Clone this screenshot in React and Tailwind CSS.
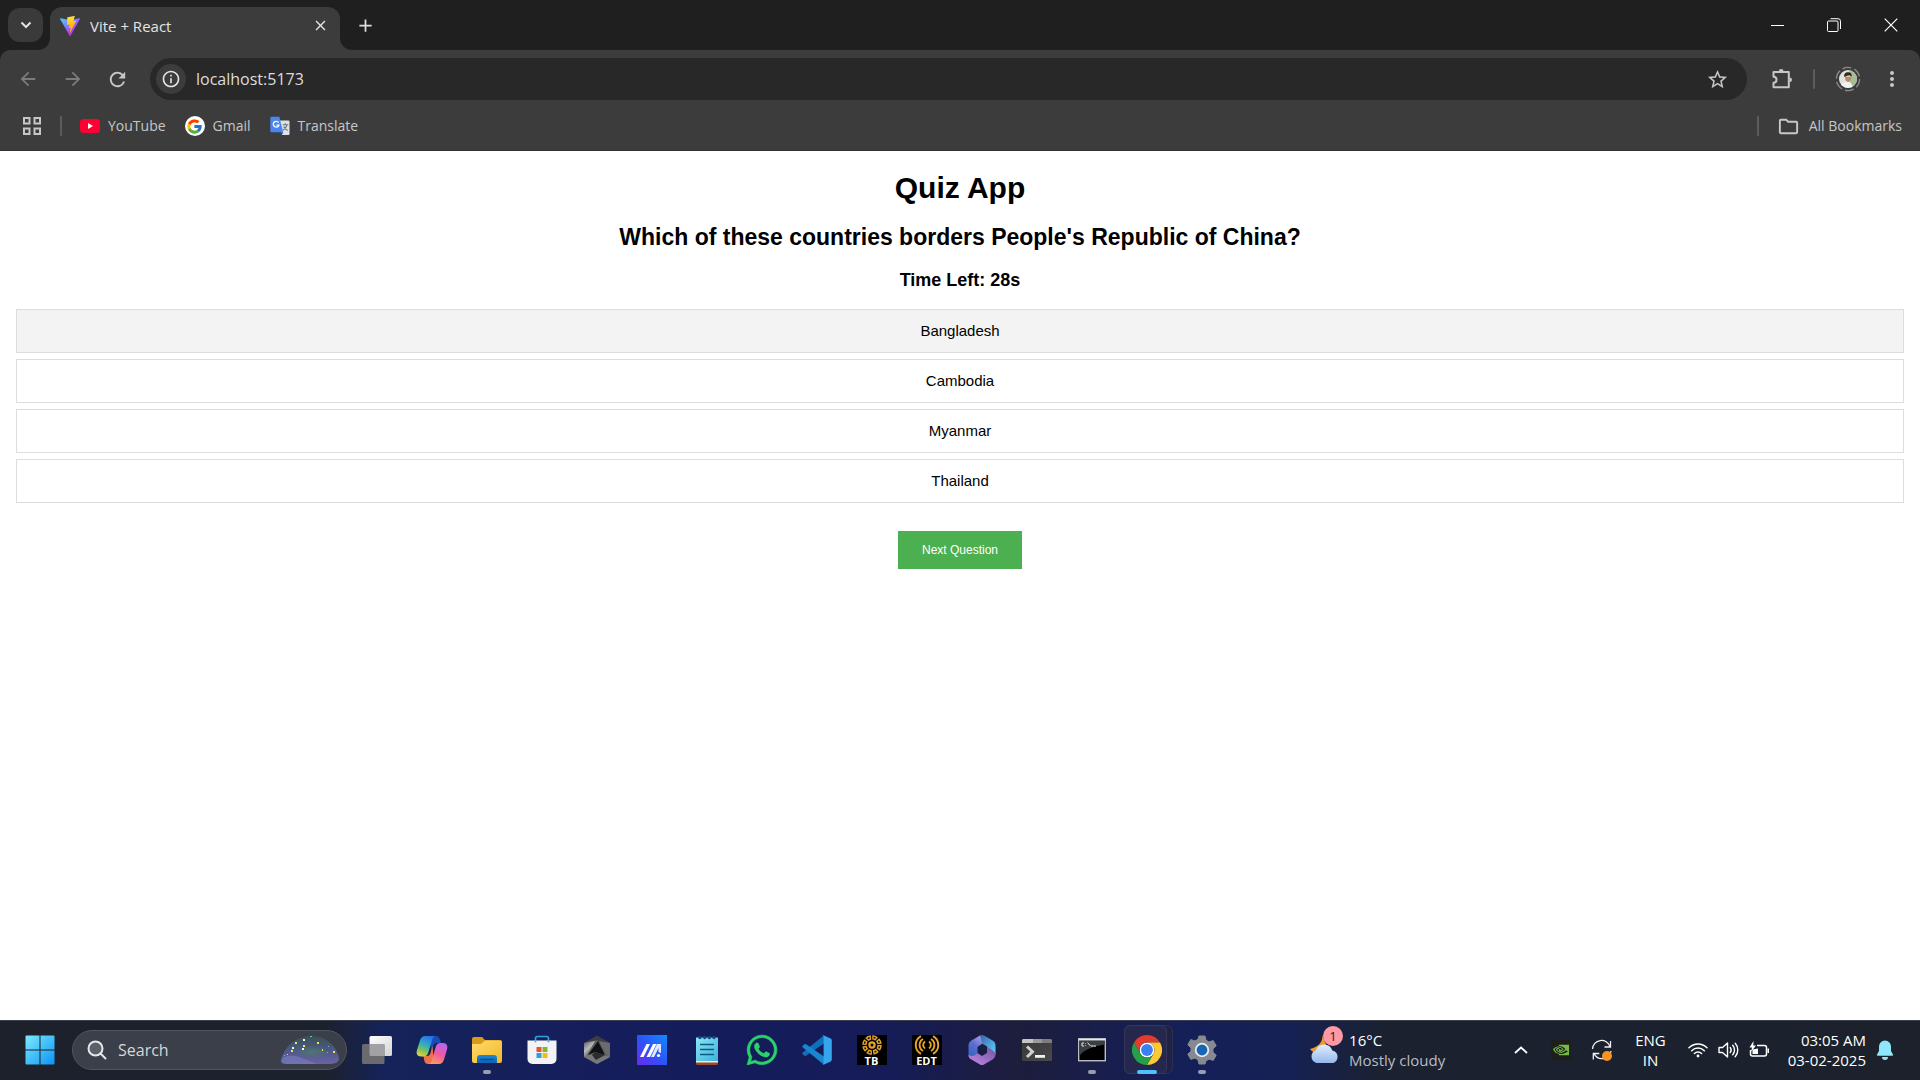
import React from "react";
import {
  MdArrowBack,
  MdArrowForward,
  MdRefresh,
  MdOutlineInfo,
  MdStarBorder,
  MdMoreVert,
  MdOutlineFolder,
  MdClose,
  MdAdd,
} from "react-icons/md";
import { FcGoogle } from "react-icons/fc";
import { FaWhatsapp } from "react-icons/fa";
import { SiNvidia } from "react-icons/si";

/* ---------- browser icons ---------- */

function ViteLogo() {
  return (
    <svg viewBox="0 0 256 257" className="size-5 shrink-0">
      <defs>
        <linearGradient id="viteA" x1="0" x2="0.58" y1="0.07" y2="0.79">
          <stop offset="0" stopColor="#41d1ff" />
          <stop offset="1" stopColor="#bd34fe" />
        </linearGradient>
        <linearGradient id="viteB" x1="0.43" x2="0.5" y1="0.02" y2="0.89">
          <stop offset="0" stopColor="#ffea83" />
          <stop offset="0.08" stopColor="#ffdd35" />
          <stop offset="1" stopColor="#ffa800" />
        </linearGradient>
      </defs>
      <path fill="url(#viteA)" d="M255.153 37.938L134.897 252.976c-2.483 4.44-8.862 4.466-11.382.048L.875 37.958c-2.746-4.814 1.371-10.646 6.827-9.67l120.385 21.517a6.537 6.537 0 0 0 2.322-.004l117.867-21.483c5.438-.991 9.574 4.796 6.877 9.62Z" />
      <path fill="url(#viteB)" d="M185.432.063L96.44 17.501a3.268 3.268 0 0 0-2.634 3.014l-5.474 92.456a3.268 3.268 0 0 0 3.997 3.378l24.777-5.718c2.318-.535 4.413 1.507 3.936 3.838l-7.361 36.047c-.495 2.426 1.782 4.5 4.151 3.78l15.304-4.649c2.372-.72 4.652 1.36 4.15 3.788l-11.698 56.621c-.732 3.542 3.979 5.473 5.943 2.437l1.313-2.028l72.516-144.72c1.215-2.423-.88-5.186-3.54-4.672l-25.505 4.922c-2.396.462-4.435-1.77-3.759-4.114l16.646-57.705c.677-2.35-1.37-4.583-3.769-4.113Z" />
    </svg>
  );
}

function ExtensionIcon() {
  return (
    <svg viewBox="0 0 22 22" className="size-[22px]" fill="none" stroke="#c7c7c7" strokeWidth="2" strokeLinejoin="round">
      <path d="M2.5 4h15.3v15.3H2.5v-4.600c2 0 3-1.400 3-3s-1-3-3-3z" />
      <path d="M7.800 3.400a2.400 2.400 0 0 1 4.800 0zM18.600 9.400a2.400 2.400 0 0 1 0 4.800z" fill="#c7c7c7" stroke="none" />
    </svg>
  );
}

function AvatarIcon() {
  return (
    <svg viewBox="0 0 26 26" className="size-[26px]">
      <defs>
        <clipPath id="avatarClip">
          <circle cx="13" cy="13" r="9" />
        </clipPath>
      </defs>
      <circle cx="13" cy="13" r="11.600" fill="none" stroke="#8a8a8a" strokeWidth="1.400" strokeDasharray="9 3.150" />
      <g clipPath="url(#avatarClip)">
        <rect width="26" height="26" fill="#dfe3dc" />
        <path d="M14 4h10v18h-8z" fill="#a9bd94" />
        <path d="M4 24c1-6 4-8 8-8s6 3 6 8z" fill="#f1f3f7" />
        <path d="M10 10.500c0 3 1 5.500 3 5.500s3.200-2 3.200-5z" fill="#b98a68" />
        <path d="M9.300 11c-.6-3.500 1.500-4.800 3.800-4.800s4.200 1.300 3.500 4.600l-2-1.600-2.600.6z" fill="#33281f" />
      </g>
    </svg>
  );
}

function YouTubeLogo() {
  return (
    <svg viewBox="0 0 20 20" className="size-5">
      <rect y="3" width="20" height="14" rx="3.500" fill="#ff0033" />
      <path d="M8 7v6l5-3z" fill="#fff" />
    </svg>
  );
}

function TranslateLogo() {
  return (
    <svg viewBox="0 0 20 20" className="size-5">
      <path d="M8 4.500h10.500a1 1 0 0 1 1 1V18a1 1 0 0 1-1 1H12z" fill="#dfe1e5" />
      <path d="M1.500.8h7.800l3.900 15.400H1.500a1.200 1.200 0 0 1-1.200-1.200V2A1.200 1.200 0 0 1 1.500.8z" fill="#4a86ee" />
      <path d="M9.500 16.200h3.700L12 19z" fill="#2452a8" />
      <path d="M12.700 8.700h5.600M15.300 7.200v1.500M17 8.900c-.5 2.300-2 4-4 5.300M13.700 10.500c.7 1.700 2 3 4 4" stroke="#677582" strokeWidth="1.100" fill="none" />
      <path d="M8.600 6.600A2.900 2.900 0 1 0 9 9.100H6.400" fill="none" stroke="#fff" strokeWidth="1.300" />
    </svg>
  );
}

function AppsGridIcon() {
  return (
    <svg viewBox="0 0 18 18" className="size-[18px]" fill="none" stroke="#c7c7c7" strokeWidth="2">
      <path d="M1 1h5.500v5.500H1zM11.500 1H17v5.500h-5.500zM1 11.500h5.500V17H1zM11.500 11.500H17V17h-5.500z" />
    </svg>
  );
}

/* ---------- taskbar icons ---------- */

function WindowsLogo() {
  return (
    <svg viewBox="0 0 30 30" className="size-[30px]">
      <defs>
        <linearGradient id="winG" x1="0" y1="0" x2="1" y2="1">
          <stop offset="0" stopColor="#7deafd" />
          <stop offset="1" stopColor="#0a94f5" />
        </linearGradient>
      </defs>
      <path fill="url(#winG)" d="M1.500.5H14.500v14H.5v-13a1 1 0 0 1 1-1zM15.500.5h13a1 1 0 0 1 1 1v13h-14zM.5 15.500h14v14h-13a1 1 0 0 1-1-1zM15.500 15.500h14v13a1 1 0 0 1-1 1h-13z" />
    </svg>
  );
}

function SearchArt() {
  return (
    <svg viewBox="0 0 60 34" className="h-[34px] w-[60px]">
      <defs>
        <linearGradient id="hill" x1="0" y1="0" x2="0" y2="1">
          <stop offset="0" stopColor="#3f6c70" stopOpacity="0.35" />
          <stop offset="0.5" stopColor="#4e5c8c" stopOpacity="0.9" />
          <stop offset="1" stopColor="#6a62a4" />
        </linearGradient>
        <radialGradient id="hillGlow">
          <stop offset="0" stopColor="#4d7f68" stopOpacity="0.8" />
          <stop offset="1" stopColor="#4d7f68" stopOpacity="0" />
        </radialGradient>
      </defs>
      <path d="M1 27C5 12 17 3 31 3s25 8 28 22c.5 5-5 6-12 6H9c-6 0-9-1-8-4z" fill="url(#hill)" />
      <path d="M2 26c7-6 14-3 20-1s10 4 14 6H8c-5 0-7-1-6-5z" fill="#7579b8" opacity=".7" />
      <ellipse cx="32" cy="19" rx="17" ry="6" fill="url(#hillGlow)" />
      <g fill="#f2e05a">
        <rect x="15" y="9" width="2" height="2" /><rect x="37" y="9" width="2" height="2" /><rect x="23" y="12" width="2" height="2" />
        <rect x="11" y="17" width="2" height="2" /><rect x="53" y="18" width="2" height="2" /><rect x="42" y="16" width="1" height="2" /><rect x="7" y="21" width="1" height="1" />
      </g>
      <g fill="#e8f4ff">
        <rect x="23" y="6" width="2" height="2" /><rect x="12" y="14" width="2" height="2" /><rect x="22" y="15" width="2" height="2" />
      </g>
      <g fill="#4fd0c0">
        <rect x="30" y="3" width="2" height="1" /><rect x="48" y="13" width="1" height="1" /><rect x="4" y="22" width="1" height="1" /><rect x="47" y="19" width="1" height="1" />
      </g>
    </svg>
  );
}

function TaskViewIcon() {
  return (
    <svg viewBox="0 0 30 30" className="size-[30px]">
      <defs>
        <linearGradient id="tv" x1="0" y1="0" x2="1" y2="1">
          <stop offset="0" stopColor="#fff" />
          <stop offset="1" stopColor="#d4d4d6" />
        </linearGradient>
      </defs>
      <rect x="7.500" y="1" width="22.500" height="20" rx="1.500" fill="url(#tv)" />
      <rect x="0" y="9" width="22.500" height="20" rx="1.500" fill="#6b6b6d" />
      <path d="M7.500 9h15v12h-13.500a1.500 1.500 0 0 1-1.500-1.500z" fill="#a2a2a4" />
    </svg>
  );
}

function CopilotIcon() {
  return (
    <svg viewBox="0 0 32 30" className="h-[30px] w-8">
      <defs>
        <linearGradient id="cpA" x1="0.6" y1="0" x2="0.2" y2="1">
          <stop offset="0" stopColor="#2a72e8" />
          <stop offset="0.4" stopColor="#2fa9c8" />
          <stop offset="0.7" stopColor="#7cc25a" />
          <stop offset="1" stopColor="#f0d23c" />
        </linearGradient>
        <linearGradient id="cpB" x1="0.7" y1="0" x2="0.3" y2="1">
          <stop offset="0" stopColor="#b765ee" />
          <stop offset="0.5" stopColor="#ee5aa0" />
          <stop offset="1" stopColor="#fb9a5e" />
        </linearGradient>
      </defs>
      <path d="M14 1h6c2 0 3 1 3.600 3l1.300 4h-4c-2 0-3 1-3.600 3l-2 7z" fill="#1c49b8" />
      <path d="M18 29h-6c-2 0-3-1-3.600-3l-1-5h3.500c2 0 3-1 3.600-3l2-7z" fill="#f07048" />
      <path d="M9 1h11c-2 0-3 1-3.700 3.500l-4 13C11.500 20 10 21.500 7.500 21.500H5c-4 0-5-3-4-6.500l3-9.500C5 2.500 6.500 1 9 1z" fill="url(#cpA)" />
      <path d="M23 29H12c2 0 3-1 3.700-3.500l4-13.500c.8-2.500 2.300-4 4.800-4H27c4 0 5 3 4 6.500l-3 10c-1 3-2.500 4.500-5 4.500z" fill="url(#cpB)" />
    </svg>
  );
}

function ExplorerIcon() {
  return (
    <svg viewBox="0 0 30 28" className="h-7 w-[30px]">
      <defs>
        <linearGradient id="fold" x1="0" y1="0" x2="1" y2="1">
          <stop offset="0" stopColor="#ffdc6a" />
          <stop offset="1" stopColor="#f3b62a" />
        </linearGradient>
        <linearGradient id="foldBlue" x1="0" y1="0" x2="0" y2="1">
          <stop offset="0" stopColor="#1b8ad8" />
          <stop offset="1" stopColor="#0e63b4" />
        </linearGradient>
      </defs>
      <path d="M0 3a2 2 0 0 1 2-2h8l3 3h15a2 2 0 0 1 2 2v8H0z" fill="#d99a1c" />
      <path d="M0 8h9l4-3.500h15a2 2 0 0 1 2 2V25a2 2 0 0 1-2 2H2a2 2 0 0 1-2-2z" fill="url(#fold)" />
      <path d="M5 27v-5a3 3 0 0 1 3-3h14a3 3 0 0 1 3 3v5z" fill="url(#foldBlue)" />
      <path d="M9 23.500h12" stroke="#0a4d92" strokeWidth="1.500" strokeLinecap="round" />
    </svg>
  );
}

function StoreIcon() {
  return (
    <svg viewBox="0 0 30 30" className="size-[30px]">
      <path d="M8.500 6.500v-3a2 2 0 0 1 2-2h9a2 2 0 0 1 2 2v3" fill="none" stroke="#2aa5dc" strokeWidth="1.700" />
      <path d="M.5 5.500h29V24a5 5 0 0 1-5 5h-19a5 5 0 0 1-5-5z" fill="#f3f3f5" />
      <path d="M7.700 5.500h1.600v1.800H7.700zM20.700 5.500h1.600v1.800h-1.600z" fill="#2aa5dc" />
      <path d="M9.500 12h5v5h-5z" fill="#e8532b" />
      <path d="M15.500 12h5v5h-5z" fill="#7db928" />
      <path d="M9.500 18h5v5h-5z" fill="#2a9fe0" />
      <path d="M15.500 18h5v5h-5z" fill="#fbb916" />
    </svg>
  );
}

function CrateIcon() {
  return (
    <svg viewBox="0 0 28 30" className="h-[30px] w-7">
      <defs>
        <linearGradient id="hexG" x1="0" y1="0" x2="0.6" y2="1">
          <stop offset="0" stopColor="#5a5a5a" />
          <stop offset="0.5" stopColor="#b9b9b9" />
          <stop offset="1" stopColor="#4a4a4a" />
        </linearGradient>
      </defs>
      <path d="M14 1l13 7v14l-13 7L1 22V8z" fill="#5d5e60" />
      <path d="M14 1l13 7-8 1-5-4L1 8z" fill="#3c3d3f" />
      <path d="M1 8l11-2L4 20l-3 2z" fill="url(#hexG)" />
      <path d="M16 6l11 2v14l-4-3z" fill="#6a6b6e" />
      <path d="M1 22l3-2 14-1 9 3-13 7z" fill="#77787a" />
      <path d="M15 6L5 20l7-3 10 3z" fill="#101113" />
      <path d="M9 20l3-3 10 3-9 5z" fill="#2b2c2e" />
    </svg>
  );
}

function MyAsusIcon() {
  return (
    <svg viewBox="0 0 30 30" className="size-[30px]">
      <defs>
        <linearGradient id="asus" x1="1" y1="0" x2="0" y2="1">
          <stop offset="0" stopColor="#0f8cff" />
          <stop offset="0.5" stopColor="#2c55f8" />
          <stop offset="1" stopColor="#6a2af0" />
        </linearGradient>
      </defs>
      <path d="M0 0h30v30H0z" fill="url(#asus)" />
      <path d="M3 22l6.500-13h3.500L6.500 22zM9.500 22L16 9h3.500L13 22z" fill="#fff" />
      <path d="M14 22l6-13h4v9l-2.500-1V13l-4.500 9z" fill="#dfe8ff" />
      <circle cx="21.500" cy="20.500" r="1.600" fill="#fff" />
    </svg>
  );
}

function NotepadIcon() {
  return (
    <svg viewBox="0 0 22 30" className="h-[30px] w-[22px]">
      <defs>
        <linearGradient id="note" x1="0" y1="0" x2="1" y2="1">
          <stop offset="0" stopColor="#8be6f5" />
          <stop offset="1" stopColor="#3bb3dc" />
        </linearGradient>
      </defs>
      <path d="M0 24h22v4.500a1.500 1.500 0 0 1-1.500 1.500h-19A1.500 1.500 0 0 1 0 28.500z" fill="#9b4a24" />
      <path d="M0 24h22v3.500H0z" fill="#f0ece6" />
      <path d="M0 2.500h22V26H0z" fill="url(#note)" />
      <path d="M4 9.500h14M4 14.500h14M4 19.500h14" stroke="#0d5c82" strokeWidth="1.500" />
      <g fill="#174b78">
        <circle cx="4" cy="2.500" r="1.700" /><circle cx="8.700" cy="2.500" r="1.700" /><circle cx="13.400" cy="2.500" r="1.700" /><circle cx="18" cy="2.500" r="1.700" />
      </g>
    </svg>
  );
}

function VSCodeIcon() {
  return (
    <svg viewBox="0 0 30 30" className="size-[30px]">
      <path d="M2.300 20.700L.5 19.100a.9.900 0 0 1 0-1.300L22 .2v8.200L4 20.700a1.300 1.300 0 0 1-1.700 0z" fill="#0f6fb8" />
      <path d="M2.300 9.300L.5 10.900a.9.900 0 0 0 0 1.300L22 29.800v-8.200L4 9.300a1.300 1.300 0 0 0-1.700 0z" fill="#1a86d0" />
      <path d="M21.500 29.800c-.6.300-1.200.1-1.600-.3.700.6 1.700.1 1.700-.8V1.300c0-.9-1-1.400-1.700-.8.400-.4 1-.6 1.600-.3l7.200 3.400a2 2 0 0 1 1.100 1.800v19.200a2 2 0 0 1-1.100 1.800z" fill="#35a5ee" />
    </svg>
  );
}

function TBIcon() {
  return (
    <span className="flex size-[30px] flex-col items-center bg-black">
      <svg viewBox="0 0 22 20" className="h-5 w-[22px] shrink-0" fill="none" stroke="#e5a32b">
        <circle cx="11" cy="10" r="2.600" strokeWidth="2.200" />
        <circle cx="11" cy="10" r="7.600" strokeWidth="4.400" strokeDasharray="4.700 1.270" />
        <circle cx="11" cy="10" r="7.600" strokeWidth="1.400" stroke="#000" strokeDasharray="2 3.970" strokeDashoffset="-1.350" />
      </svg>
      <span className="font-['Open_Sans',sans-serif] text-[11px] leading-[11px] font-bold text-white">TB</span>
    </span>
  );
}

function EDTIcon() {
  return (
    <span className="flex size-[30px] flex-col items-center bg-black">
      <svg viewBox="0 0 26 20" className="h-5 w-[26px] shrink-0" fill="none" stroke="#e5a32b" strokeWidth="1.900">
        <path d="M7 1.200a10 10 0 0 0 0 17.600M9 4a7 7 0 0 0 0 12M11 6.500a4.200 4.200 0 0 0 0 7" />
        <path d="M19 1.200a10 10 0 0 1 0 17.600M17 4a7 7 0 0 1 0 12M15 6.500a4.200 4.200 0 0 1 0 7" />
      </svg>
      <span className="font-['Open_Sans',sans-serif] text-[11px] leading-[11px] font-bold text-white">EDT</span>
    </span>
  );
}

function M365Icon() {
  return (
    <svg viewBox="0 0 28 30" className="h-[30px] w-7">
      <defs>
        <linearGradient id="m3a" x1="0" y1="1" x2="0.6" y2="0">
          <stop offset="0" stopColor="#2f5fc0" />
          <stop offset="0.6" stopColor="#5a6fd0" />
          <stop offset="1" stopColor="#a79bea" />
        </linearGradient>
        <linearGradient id="m3b" x1="0" y1="0" x2="1" y2="1">
          <stop offset="0" stopColor="#3f5fae" />
          <stop offset="1" stopColor="#58d8fa" />
        </linearGradient>
        <linearGradient id="m3c" x1="0" y1="1" x2="1" y2="0">
          <stop offset="0" stopColor="#c58be8" />
          <stop offset="1" stopColor="#6f529c" />
        </linearGradient>
      </defs>
      <path d="M12 .6L3 5.800A5 5 0 0 0 .5 10v10c0 2 1 3.500 2.500 4.200L9.500 19v-7l5-3.500L19 3z" fill="url(#m3a)" />
      <path d="M12 .6c1.300-.8 2.700-.8 4 0l9 5.200a5 5 0 0 1 2.500 4.200v9.500L19 18v-6.500l-5-3z" fill="url(#m3b)" />
      <path d="M3 24.200c-1.500-.8-2.500-2.200-2.500-4.200 3.500 2 6.500 1 9-2l4.500 3 5-3V11.500l7.500 5.500c1 .8 1 2 1 3a5 5 0 0 1-2.500 4.200l-9 5.200c-1.300.8-2.700.8-4 0z" fill="url(#m3c)" />
    </svg>
  );
}

function TerminalIcon() {
  return (
    <svg viewBox="0 0 30 24" className="h-6 w-[30px]">
      <defs>
        <linearGradient id="termG" x1="0" y1="0" x2="1" y2="1">
          <stop offset="0" stopColor="#383838" />
          <stop offset="1" stopColor="#494949" />
        </linearGradient>
      </defs>
      <rect y="1" width="30" height="22" rx="1.500" fill="url(#termG)" />
      <path d="M0 5V2.500A1.500 1.500 0 0 1 1.500 1h27A1.500 1.500 0 0 1 30 2.500V5z" fill="#7d7d7d" />
      <path d="M0 5V2.500A1.500 1.500 0 0 1 1.500 1H11v4z" fill="#c4c4c4" />
      <path d="M11 1h9v4h-9z" fill="#9a9a9a" />
      <path d="M5 8.500l5.500 5.200L5 19" fill="none" stroke="#d0d0d0" strokeWidth="3" />
      <path d="M13 17h10v2.800H13z" fill="#f1f1f1" />
    </svg>
  );
}

function CmdIcon() {
  return (
    <svg viewBox="0 0 28 24" className="h-6 w-7">
      <rect x=".7" y=".7" width="26.600" height="22" fill="#000" stroke="#b9bdc4" strokeWidth="1.400" />
      <path d="M1.500 2.500h25v4C17 8 6 11 1.500 18z" fill="#3a3d42" />
      <path d="M1 1h26v1.500H1z" fill="#e6e8ec" />
      <path d="M6 5H4v3h2M7.500 5.500v.6M7.500 7.400v.6M9.500 4.500l3 3.500M13 8h5" stroke="#e6e8ec" strokeWidth="1" fill="none" />
    </svg>
  );
}

function ChromeIcon() {
  return (
    <svg viewBox="0 0 48 48" className="size-[30px]">
      <circle cx="24" cy="24" r="12" fill="#fff" />
      <path fill="#e33b2e" d="M24,12H44.7812a23.9939,23.9939,0,0,0-41.5639.0029L13.6079,30l.0093-.0024A11.9852,11.9852,0,0,1,24,12Z" />
      <circle cx="24" cy="24" r="9.500" fill="#3b7ff0" />
      <path fill="#fcc934" d="M34.3913,30.0029,24.0007,48A23.994,23.994,0,0,0,44.78,12.0031H23.9989l-.0025.0093A11.985,11.985,0,0,1,34.3913,30.0029Z" />
      <path fill="#25a04a" d="M13.6086,30.0031,3.218,12.006A23.994,23.994,0,0,0,24.0025,48L34.3931,30.0029l-.0067-.0068a11.9852,11.9852,0,0,1-20.7778.007Z" />
    </svg>
  );
}

function SettingsIcon() {
  return (
    <svg viewBox="0 0 30 30" className="size-[30px]">
      <path
        d="M12 1h6l1 4.200 3 1.700 4.200-1.300 3 5.200-3.200 3v3.400l3.200 3-3 5.200-4.200-1.300-3 1.700L18 29h-6l-1-4.200-3-1.700-4.200 1.300-3-5.200 3.200-3v-3.400l-3.200-3 3-5.200L8 5.900l3-1.700z"
        fill="#868a90"
        stroke="#868a90"
        strokeLinejoin="round"
      />
      <circle cx="15" cy="15" r="6.300" fill="#1766b4" stroke="#e9edf2" strokeWidth="1.800" />
    </svg>
  );
}

function WeatherIcon() {
  return (
    <svg viewBox="0 0 32 32" className="size-8">
      <defs>
        <linearGradient id="cloud" x1="0" y1="0" x2="0" y2="1">
          <stop offset="0" stopColor="#e2efff" />
          <stop offset="1" stopColor="#94b8ea" />
        </linearGradient>
      </defs>
      <path d="M13 1c1.500 6-3 12-12 14 4 6 15 6 18 0z" fill="#ee9b2c" />
      <path d="M7.500 29a6.500 6.500 0 0 1-.8-12.400 8.700 8.700 0 0 1 16.600 0A6.500 6.500 0 0 1 24.500 29z" fill="url(#cloud)" />
    </svg>
  );
}

function SyncIcon() {
  return (
    <svg viewBox="0 0 22 22" className="size-[22px]" fill="none" stroke="#f0f0f0" strokeWidth="1.300">
      <path d="M1.500 10A9 9 0 0 1 19 7.500M19.500 2v6h-6M20 12a9 9 0 0 1-17 2.500M2.300 20.500v-6h6" />
      <circle cx="16" cy="17" r="5" fill="#f7931e" stroke="none" />
    </svg>
  );
}

function WifiIcon() {
  return (
    <svg viewBox="0 0 20 16" className="h-4 w-5" fill="none" stroke="#fff" strokeWidth="1.500" strokeLinecap="round">
      <path d="M1 5.800a12.700 12.700 0 0 1 18 0M3.700 8.700a8.900 8.900 0 0 1 12.600 0M6.400 11.500a5.100 5.100 0 0 1 7.200 0" />
      <circle cx="10" cy="14" r="1.400" fill="#fff" stroke="none" />
    </svg>
  );
}

function SpeakerIcon() {
  return (
    <svg viewBox="0 0 21 18" className="h-[18px] w-[21px]" fill="none" stroke="#fff" strokeWidth="1.400" strokeLinecap="round" strokeLinejoin="round">
      <path d="M1 6.500h3.500L9.500 2v14l-5-4.500H1z" />
      <path d="M12.200 6.500a4 4 0 0 1 0 5M14.700 4.300a7 7 0 0 1 0 9.400M17.200 2.300a10 10 0 0 1 0 13.400" />
    </svg>
  );
}

function BatteryIcon() {
  return (
    <svg viewBox="0 0 21 18" className="h-[18px] w-[21px]" fill="none" stroke="#fff" strokeWidth="1.500">
      <path d="M8 4.500h7.500a2 2 0 0 1 2 2v6.500a2 2 0 0 1-2 2H3.500a2 2 0 0 1-2-2V9" />
      <path d="M18.500 7.500h1.500v4.500h-1.500z" fill="#fff" stroke="none" />
      <path d="M3.500 8.500L9 7.500v5.500H3.500z" fill="#fff" stroke="none" />
      <path d="M4.500 0L.5 6.500H3L2 11l5-6.500H4.300z" fill="#fff" stroke="none" />
    </svg>
  );
}

function BellIcon() {
  return (
    <svg viewBox="0 0 18 20" className="h-5 w-[18px]" fill="#8fe6fb">
      <path d="M9 .5a6 6 0 0 1 6 6V11l2 3.500a.8.800 0 0 1-.7 1.200H1.700a.8.800 0 0 1-.7-1.200L3 11V6.500a6 6 0 0 1 6-6zM6 17h6a3 3 0 0 1-6 0z" />
    </svg>
  );
}

/* ---------- data ---------- */

const bookmarks = [
  { label: "YouTube", icon: <YouTubeLogo /> },
  {
    label: "Gmail",
    icon: (
      <span className="flex size-5 items-center justify-center rounded-full bg-white">
        <FcGoogle size={17} />
      </span>
    ),
  },
  { label: "Translate", icon: <TranslateLogo /> },
];

const options = ["Bangladesh", "Cambodia", "Myanmar", "Thailand"];

const apps = [
  { name: "Task view", icon: <TaskViewIcon /> },
  { name: "Copilot", icon: <CopilotIcon /> },
  { name: "File Explorer", icon: <ExplorerIcon />, running: true },
  { name: "Microsoft Store", icon: <StoreIcon /> },
  { name: "Armoury Crate", icon: <CrateIcon /> },
  { name: "MyASUS", icon: <MyAsusIcon /> },
  { name: "Notepad", icon: <NotepadIcon /> },
  { name: "WhatsApp", icon: <FaWhatsapp size={34} color="#2bd46a" stroke="#2bd46a" strokeWidth={10} /> },
  { name: "Visual Studio Code", icon: <VSCodeIcon /> },
  { name: "TB", icon: <TBIcon /> },
  { name: "EDT", icon: <EDTIcon /> },
  { name: "Microsoft 365", icon: <M365Icon /> },
  { name: "Terminal", icon: <TerminalIcon /> },
  { name: "Command Prompt", icon: <CmdIcon />, running: true },
  { name: "Google Chrome", icon: <ChromeIcon />, active: true },
  { name: "Settings", icon: <SettingsIcon />, running: true },
];

/* ---------- sections ---------- */

function TabStrip() {
  return (
    <div className="flex h-[50px] items-end bg-[#1f1f1f]">
      <button aria-label="Search tabs" className="mb-2 ml-2 flex h-[34px] w-[35px] items-center justify-center rounded-xl bg-[#3a3a3a]">
        <svg viewBox="0 0 12 8" className="h-2 w-3" fill="none" stroke="#e3e3e3" strokeWidth="2">
          <path d="M1.500 1.500L6 6l4.500-4.500" />
        </svg>
      </button>
      <div className="relative ml-[7px] flex h-[43px] w-[290px] items-center rounded-t-xl bg-[#3c3c3c] pr-2 pb-1.5 pl-2.5">
        <svg viewBox="0 0 12 12" className="absolute bottom-0 -left-3 size-3" fill="#3c3c3c">
          <path d="M12 0v12H0A12 12 0 0 0 12 0z" />
        </svg>
        <svg viewBox="0 0 12 12" className="absolute -right-3 bottom-0 size-3" fill="#3c3c3c">
          <path d="M0 0v12h12A12 12 0 0 1 0 0z" />
        </svg>
        <ViteLogo />
        <span className="ml-2.5 flex-1 text-[15px] leading-5 text-[#e3e3e3]">Vite + React</span>
        <button aria-label="Close tab" className="flex size-6 items-center justify-center text-[#e3e3e3]">
          <MdClose size={17} />
        </button>
      </div>
      <button aria-label="New tab" className="mb-3 ml-3 flex size-[26px] items-center justify-center text-[#dedede]">
        <MdAdd size={21} />
      </button>
      <div className="ml-auto flex h-full">
        <button aria-label="Minimize" className="flex w-[57px] items-center justify-center">
          <span className="h-px w-[13px] bg-white" />
        </button>
        <button aria-label="Restore" className="flex w-14 items-center justify-center">
          <svg viewBox="0 0 14 14" className="size-3.5" fill="none" stroke="#fff">
            <rect x=".5" y="3" width="10.500" height="10.500" rx="1" />
            <path d="M3.500.7h7.500a2.500 2.500 0 0 1 2.500 2.500V11" />
          </svg>
        </button>
        <button aria-label="Close" className="flex w-[58px] items-center justify-center">
          <svg viewBox="0 0 14 14" className="size-3.5" stroke="#fff" strokeWidth="1.200">
            <path d="M.7.7l12.600 12.600M13.300.7L.7 13.300" />
          </svg>
        </button>
      </div>
    </div>
  );
}

function Toolbar() {
  return (
    <div className="flex h-[58px] items-center pl-[5px]">
      <button aria-label="Back" className="flex w-[45px] justify-center text-[#7b7b7b]">
        <MdArrowBack size={22} />
      </button>
      <button aria-label="Forward" className="flex w-[45px] justify-center text-[#7b7b7b]">
        <MdArrowForward size={22} />
      </button>
      <button aria-label="Reload" className="flex w-[45px] justify-center text-[#c7c7c7]">
        <MdRefresh size={23} />
      </button>
      <div className="ml-2.5 flex h-[42px] flex-1 items-center rounded-full bg-[#282828] pr-[18px] pl-1.5">
        <button aria-label="View site information" className="flex size-[30px] items-center justify-center rounded-full bg-[#3c3c3c] text-[#e3e3e3]">
          <MdOutlineInfo size={20} />
        </button>
        <input
          aria-label="Address"
          defaultValue="localhost:5173"
          className="ml-2.5 min-w-0 flex-1 bg-transparent text-base text-[#dcdcdc] outline-none"
        />
        <button aria-label="Bookmark this tab" className="text-[#c7c7c7]">
          <MdStarBorder size={23} />
        </button>
      </div>
      <button aria-label="Extensions" className="ml-6">
        <ExtensionIcon />
      </button>
      <span className="ml-5 h-5 w-0.5 rounded bg-[#5c5c5c]" />
      <button aria-label="Profile" className="ml-5">
        <AvatarIcon />
      </button>
      <button aria-label="Menu" className="mr-4 ml-[19px] text-[#c7c7c7]">
        <MdMoreVert size={24} />
      </button>
    </div>
  );
}

function BookmarksBar() {
  return (
    <nav className="flex h-[43px] items-center border-b border-[#363234] pr-[18px] pb-1.5 pl-[23px] text-sm text-[#c7c7c7]">
      <button aria-label="Apps">
        <AppsGridIcon />
      </button>
      <span className="ml-[19px] h-5 w-0.5 rounded bg-[#5c5c5c]" />
      <div className="ml-[18px] flex gap-[19px]">
        {bookmarks.map((b) => (
          <a key={b.label} href="#" className="flex items-center gap-2">
            {b.icon}
            {b.label}
          </a>
        ))}
      </div>
      <span className="ml-auto h-5 w-0.5 rounded bg-[#5c5c5c]" />
      <button className="ml-[18px] flex items-center gap-[9px]">
        <MdOutlineFolder size={23} />
        All Bookmarks
      </button>
    </nav>
  );
}

function Quiz() {
  return (
    <main className="flex flex-1 flex-col items-center bg-white px-4 pt-[19px] font-['Liberation_Sans',Arial,sans-serif] text-black">
      <h1 className="text-[30px] leading-9 font-bold">Quiz App</h1>
      <h2 className="mt-[17px] text-[23px] leading-7 font-bold">Which of these countries borders People's Republic of China?</h2>
      <h3 className="mt-[18px] text-lg leading-[22px] font-bold">Time Left: 28s</h3>
      <ul className="mt-[18px] flex w-full flex-col gap-1.5">
        {options.map((o, i) => (
          <li key={o}>
            <button
              className={
                i === 0
                  ? "h-11 w-full border border-[#dddddd] bg-[#f3f3f3] text-[15px] leading-5"
                  : "h-11 w-full border border-[#dddddd] bg-white text-[15px] leading-5 hover:bg-[#f3f3f3]"
              }
            >
              {o}
            </button>
          </li>
        ))}
      </ul>
      <button className="mt-7 h-[38px] bg-[#4caf50] px-6 text-xs text-white">Next Question</button>
    </main>
  );
}

function Taskbar() {
  return (
    <footer className="flex h-[60px] items-center border-t border-[#3c404c] bg-linear-[90deg,#1c212c_0%,#1c212e_17%,#15235a_20%,#151c5c_36%,#151c58_46%,#1d1d3c_53%,#151f58_61%,#152155_67%,#1b2130_72%,#1c212c_100%] pb-0.5 text-white">
      <button aria-label="Start" className="ml-[25px]">
        <WindowsLogo />
      </button>
      <label className="ml-[17px] flex h-10 w-[275px] items-center rounded-full border border-[#50555f] bg-[#3b3f49] pr-1.5 pl-3.5">
        <svg viewBox="0 0 20 20" className="size-5 shrink-0" fill="#5c606a" stroke="#e6e7ea" strokeWidth="2">
          <circle cx="8.500" cy="8.500" r="7" />
          <path d="M13.500 13.500L18.500 18.500" strokeLinecap="round" />
        </svg>
        <input
          aria-label="Search"
          placeholder="Search"
          className="ml-[11px] min-w-0 flex-1 bg-transparent text-base text-[#d5d7db] outline-none placeholder:text-[#d5d7db]"
        />
        <SearchArt />
      </label>
      <div className="ml-0.5 flex h-full">
        {apps.map((a) => (
          <button key={a.name} aria-label={a.name} className="relative flex w-[55px] items-center justify-center">
            {a.active && (
              <>
                <span className="absolute inset-y-1 left-[5px] w-[49px] rounded-md border border-[#2e3052] bg-[#1f2145]" />
                <span className="absolute inset-y-1 left-[5px] w-[43px] rounded-md border border-[#34365c] bg-[#25274c]" />
              </>
            )}
            <span className="relative flex">{a.icon}</span>
            {a.active && <span className="absolute bottom-1 h-1 w-5 rounded-full bg-[#4cc2ff]" />}
            {a.running && <span className="absolute bottom-1 h-1 w-2 rounded-full bg-[#9a9cb0]" />}
          </button>
        ))}
      </div>
      <button className="ml-auto flex items-center text-left text-[15px] leading-5">
        <span className="relative mr-2">
          <WeatherIcon />
          <span className="absolute -top-2 -right-0.5 flex size-5 items-center justify-center rounded-full bg-[#ff99a4] text-[13px] text-[#222]">1</span>
        </span>
        <span className="block">
          <span className="block">16°C</span>
          <span className="block text-[#b9bcc4]">Mostly cloudy</span>
        </span>
      </button>
      <div className="ml-[69px] flex items-center text-[15px] leading-5">
        <button aria-label="Show hidden icons">
          <svg viewBox="0 0 14 8" className="h-2 w-3.5" fill="none" stroke="#fff" strokeWidth="1.800">
            <path d="M1 7l6-5.500L13 7" />
          </svg>
        </button>
        <button aria-label="NVIDIA" className="ml-[23px] flex size-5 items-center justify-center bg-[#1d1f1c]">
          <SiNvidia size={16} color="#76b947" />
        </button>
        <button aria-label="Updates" className="ml-5">
          <SyncIcon />
        </button>
        <button className="ml-[22px] text-center">
          ENG
          <br />
          IN
        </button>
        <button aria-label="Network, volume and battery" className="ml-[22px] flex items-center gap-2.5">
          <WifiIcon />
          <SpeakerIcon />
          <BatteryIcon />
        </button>
        <button className="ml-[18px] text-right">
          03:05 AM
          <br />
          03-02-2025
        </button>
        <button aria-label="Notifications" className="mr-[26px] ml-2.5">
          <BellIcon />
        </button>
      </div>
    </footer>
  );
}

export default function App() {
  return (
    <div className="flex min-h-screen flex-col bg-[#1f1f1f] font-['Open_Sans','Noto_Sans',sans-serif]">
      <TabStrip />
      <div className="rounded-t-[10px] bg-[#3c3c3c]">
        <Toolbar />
        <BookmarksBar />
      </div>
      <Quiz />
      <Taskbar />
    </div>
  );
}
